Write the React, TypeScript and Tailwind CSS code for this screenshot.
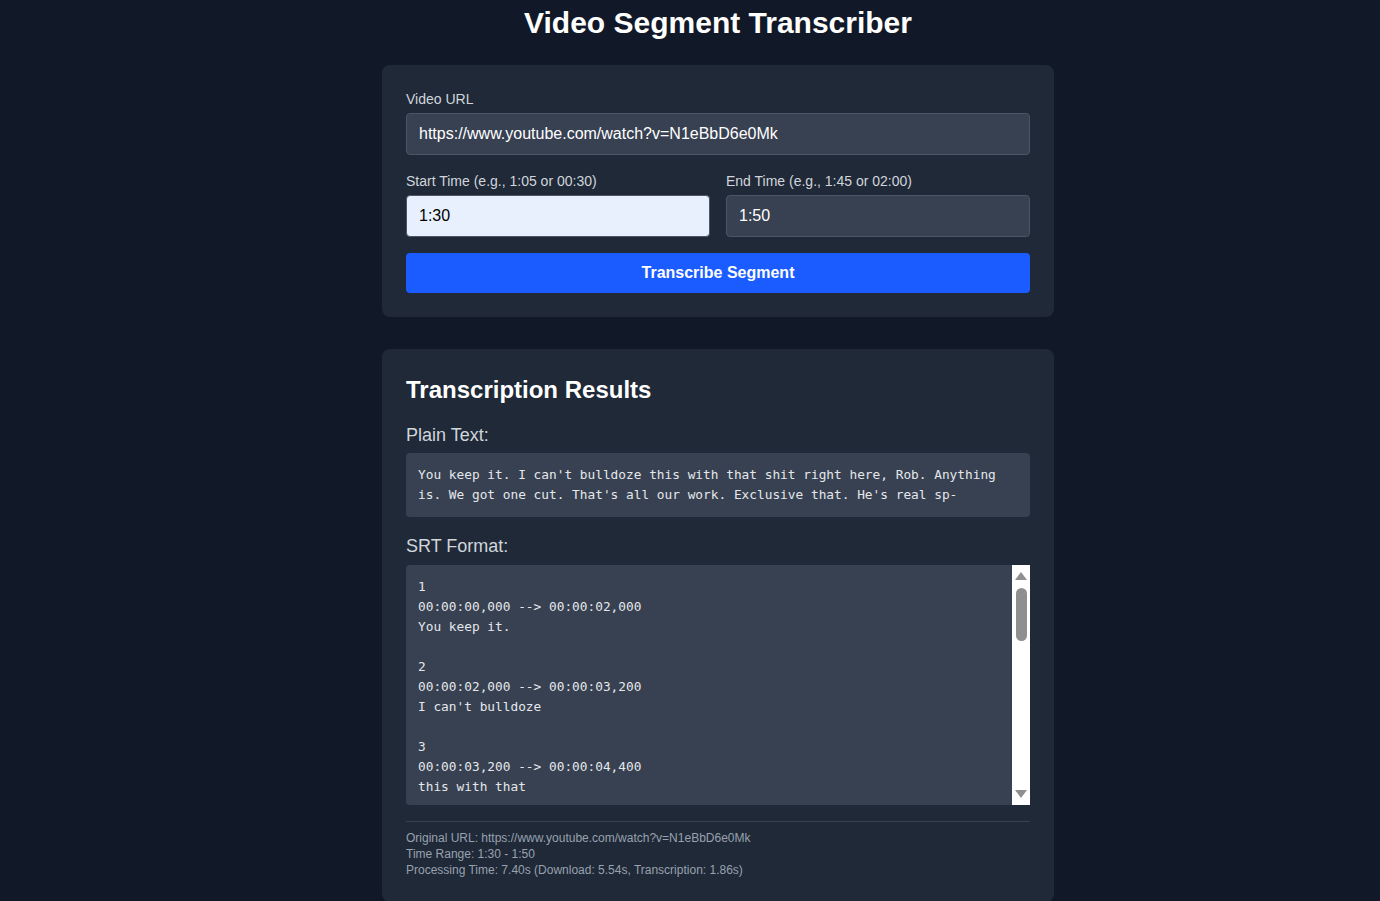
import { ReactElement } from "react";

const srt = `1
00:00:00,000 --> 00:00:02,000
You keep it.

2
00:00:02,000 --> 00:00:03,200
I can't bulldoze

3
00:00:03,200 --> 00:00:04,400
this with that

4
00:00:04,400 --> 00:00:05,600
shit right here, Rob.

5
00:00:05,600 --> 00:00:07,000
Anything is.

6
00:00:07,000 --> 00:00:08,600
We got one cut.

7
00:00:08,600 --> 00:00:10,200
That's all our work.

8
00:00:10,200 --> 00:00:12,000
Exclusive that.

9
00:00:12,000 --> 00:00:13,400
He's real sp-`;

function FakeScrollbar(): ReactElement {
  return (
    <div className="w-[18px] shrink-0 bg-white flex flex-col items-center py-[6px]">
      {/* up arrow */}
      <svg width="12" height="8" viewBox="0 0 12 8" className="mt-[1px]">
        <path d="M6 0 L12 8 L0 8 Z" fill="#8f8f8f" />
      </svg>
      {/* thumb */}
      <div className="mt-[8px] w-[11px] h-[53px] rounded-full bg-[#8f8f8f]" />
      <div className="flex-1" />
      {/* down arrow */}
      <svg width="12" height="8" viewBox="0 0 12 8" className="mb-[1px]">
        <path d="M0 0 L12 0 L6 8 Z" fill="#8f8f8f" />
      </svg>
    </div>
  );
}

export default function App(): ReactElement {
  return (
    <div className="min-h-[901px] w-full bg-[#111827] text-white font-['Liberation_Sans',Arial,sans-serif] pl-[56px]">
      <div className="mx-auto w-[672px] pt-[5px] pb-10">
        {/* Page title */}
        <h1 className="text-center text-[30px] leading-9 font-bold mb-6">Video Segment Transcriber</h1>

        {/* Form card */}
        <div className="bg-[#1f2937] rounded-lg p-6">
          <label className="block text-sm text-gray-300 leading-5 mb-1">Video URL</label>
          <div className="h-[42px] rounded border border-[#4b5563] bg-[#374151] flex items-center px-3 text-base text-white">
            https://www.youtube.com/watch?v=N1eBbD6e0Mk
          </div>
          <div className="grid grid-cols-2 gap-4 mt-4">
            <div>
              <label className="block text-sm text-gray-300 leading-5 mb-1">Start Time (e.g., 1:05 or 00:30)</label>
              <div className="h-[42px] rounded border border-[#4b5563] bg-[#e8f0fe] flex items-center px-3 text-base text-black">1:30</div>
            </div>
            <div>
              <label className="block text-sm text-gray-300 leading-5 mb-1">End Time (e.g., 1:45 or 02:00)</label>
              <div className="h-[42px] rounded border border-[#4b5563] bg-[#374151] flex items-center px-3 text-base text-white">1:50</div>
            </div>
          </div>
          <button className="mt-4 w-full h-10 rounded bg-[#1a5cff] text-white font-bold text-base">Transcribe Segment</button>
        </div>

        {/* Results card */}
        <div className="mt-8 bg-[#1f2937] rounded-lg p-6">
          <h2 className="text-2xl font-bold leading-8 mt-[1px]">Transcription Results</h2>
          <h3 className="mt-[15px] text-lg leading-7 text-gray-300">Plain Text:</h3>
          <div className="mt-1 bg-[#374151] rounded p-3 text-[12.8px] leading-5 text-gray-200 font-['DejaVu_Sans_Mono',monospace] whitespace-pre-wrap">
            You keep it. I can't bulldoze this with that shit right here, Rob. Anything is. We got one cut. That's all our work. Exclusive that. He's real sp-
          </div>
          <h3 className="mt-[15px] text-lg leading-7 text-gray-300">SRT Format:</h3>
          <div className="mt-[5px] h-[240px] flex bg-[#374151] rounded-l overflow-hidden">
            <pre className="flex-1 overflow-hidden p-3 text-[12.8px] leading-5 text-gray-200 font-['DejaVu_Sans_Mono',monospace] whitespace-pre-wrap">
              {srt}
            </pre>
            <FakeScrollbar />
          </div>
          <div className="mt-4 pt-2 border-t border-[#374151] text-xs leading-4 text-gray-400">
            <p>Original URL: https://www.youtube.com/watch?v=N1eBbD6e0Mk</p>
            <p>Time Range: 1:30 - 1:50</p>
            <p>Processing Time: 7.40s (Download: 5.54s, Transcription: 1.86s)</p>
          </div>
        </div>
      </div>
    </div>
  );
}
